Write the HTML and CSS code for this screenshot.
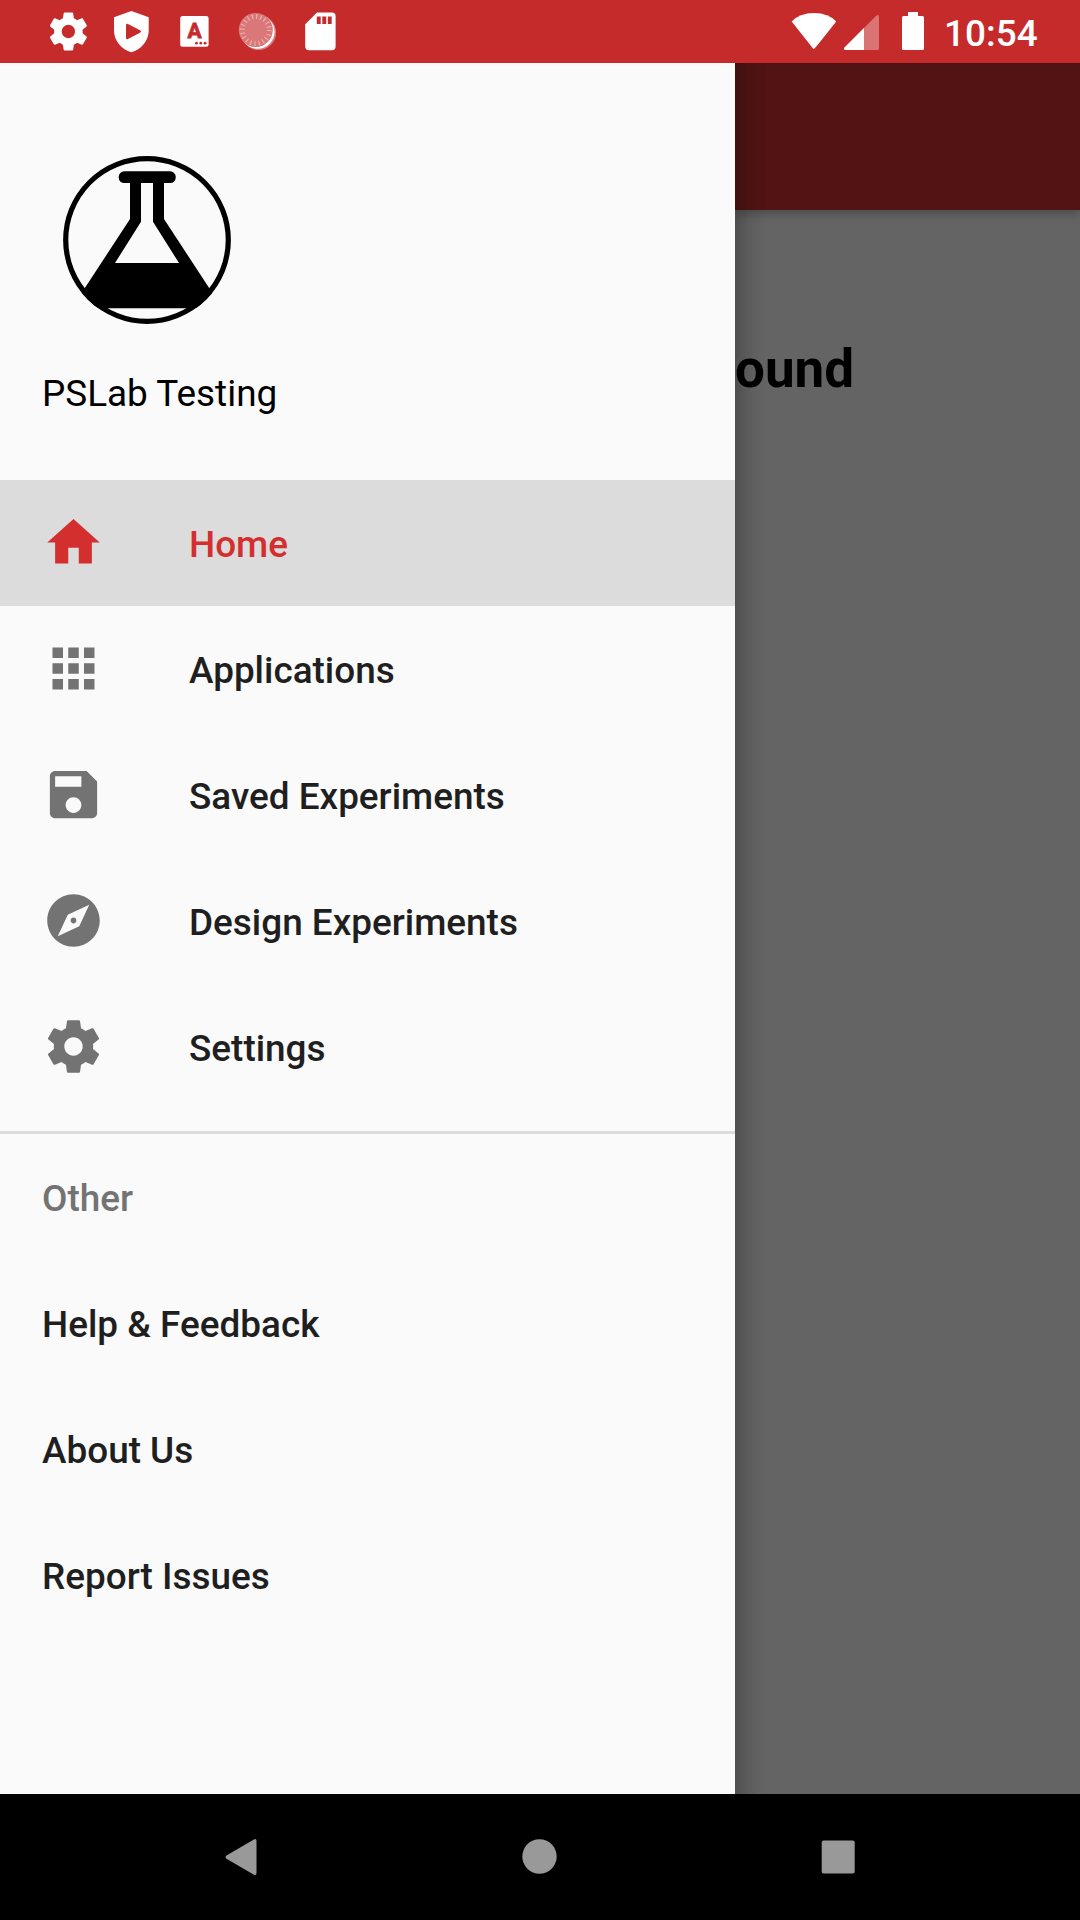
FILE: index.html
```html
<!DOCTYPE html>
<html lang="en">
<head>
<meta charset="utf-8">
<title>PSLab Testing</title>
<link rel="stylesheet" href="styles.css">
</head>
<body>
<div class="screen">
  <header class="status-bar">
    <div class="notifications">
      <svg class="status-icon" viewBox="0 0 63 63"><path transform="translate(8.6 8.7) scale(1.9)" d="M19.43 12.98c.04-.32.07-.64.07-.98s-.03-.66-.07-.98l2.11-1.65c.19-.15.24-.42.12-.64l-2-3.46c-.12-.22-.39-.3-.61-.22l-2.49 1c-.52-.4-1.08-.73-1.69-.98l-.38-2.65C14.46 2.18 14.25 2 14 2h-4c-.25 0-.46.18-.49.42l-.38 2.65c-.61.25-1.17.59-1.69.98l-2.49-1c-.23-.09-.49 0-.61.22l-2 3.46c-.13.22-.07.49.12.64l2.11 1.65c-.04.32-.07.65-.07.98s.03.66.07.98l-2.11 1.65c-.19.15-.24.42-.12.64l2 3.46c.12.22.39.3.61.22l2.49-1c.52.4 1.08.73 1.69.98l.38 2.65c.03.24.24.42.49.42h4c.25 0 .46-.18.49-.42l.38-2.65c.61-.25 1.17-.59 1.69-.98l2.49 1c.23.09.49 0 .61-.22l2-3.46c.12-.22.07-.49-.12-.64l-2.11-1.65zM12 15.5c-1.93 0-3.5-1.57-3.5-3.5s1.57-3.5 3.5-3.5 3.5 1.57 3.5 3.5-1.57 3.5-3.5 3.5z"/></svg>
      <svg class="status-icon" viewBox="100 0 63 63"><path fill-rule="evenodd" d="M131.4 11L148.7 17.3V30.500C148.700 41 141 49.500 131.400 52.300C121.800 49.500 114 41 114 30.500V17.300ZM126 25.300V37.800Q126 40 128 39L140 32.800Q142 31.500 140 30.300L128 24Q126 23 126 25.300Z"/></svg>
      <svg class="status-icon" viewBox="163 0 63 63"><rect x="180.200" y="16" width="28.400" height="30.800" rx="2.500"/><text class="badge-letter" x="194.500" y="38" text-anchor="middle">A</text><g class="cutout"><circle cx="196.500" cy="43.200" r="1.400"/><circle cx="200.800" cy="43.200" r="1.400"/><circle cx="205.100" cy="43.200" r="1.400"/></g></svg>
      <svg class="status-icon" viewBox="226 0 63 63"><circle cx="258.600" cy="32.500" r="17.500" opacity=".4"/><circle cx="257.500" cy="31.800" r="17"/><circle class="cutout" cx="255.700" cy="30" r="17"/><circle cx="255.700" cy="30" r="17" opacity=".36"/><circle class="sun-rays" cx="255.700" cy="30" r="13.500"/></svg>
      <svg class="status-icon" viewBox="289 0 63 63"><path fill-rule="evenodd" d="M317 12.500H332Q335.600 12.500 335.600 16V46.500Q335.600 50.200 332 50.200H309Q305.200 50.200 305.200 46.500V24.300ZM316.800 16.500V24H320.700V16.500ZM322.300 16.500V24H326.200V16.500ZM327.800 16.500V24H331.700V16.500Z"/></svg>
    </div>
    <div class="system-state">
      <svg class="state-icons" viewBox="785 0 145 63"><path d="M814 49Q815.400 48 836.200 21.500Q828.500 13 814 13Q799.500 13 791.700 21.500L812.800 48.300Q813.400 49 814 49Z"/><path d="M864 30V50H845Q843 49.500 844 48L876 16Q879 13.500 879 17V48.500Q879 50 877.500 50H864Z" opacity=".34"/><path d="M864 28V50H845.500Q843 49.500 844.500 47.500Z"/><path d="M908 12H918V16H922.500Q924 16 924 17.500V48.500Q924 50 922.500 50H903.500Q902 50 902 48.500V17.500Q902 16 903.500 16H908Z"/></svg>
      <span class="clock">10:54</span>
    </div>
  </header>

  <div class="content">
    <aside class="drawer">
      <div class="drawer-header">
        <svg class="logo" viewBox="63 156 168 168">
          <defs><clipPath id="logo-disc"><circle cx="147" cy="240" r="84"/></clipPath></defs>
          <circle class="logo-ring" cx="147" cy="240" r="81.300"/>
          <g clip-path="url(#logo-disc)">
            <rect x="118.700" y="171.300" width="57" height="11.700" rx="5.500"/>
            <path fill-rule="evenodd" d="M130 180H164V219L217 300L211 308.300H83L77 300L130 219ZM141 182.800V221.700L115 263H179L153 221.700V182.800Z"/>
          </g>
        </svg>
        <div class="account-name">PSLab Testing</div>
      </div>
      <nav class="menu">
        <a class="menu-item menu-item-active">
          <svg class="menu-icon" viewBox="0 0 24 24"><path d="M10 20v-6h4v6h5v-8h3L12 3 2 12h3v8z"/></svg>
          <span>Home</span>
        </a>
        <a class="menu-item">
          <svg class="menu-icon" viewBox="0 0 24 24"><path d="M4 8h4V4H4v4zm6 12h4v-4h-4v4zm-6 0h4v-4H4v4zm0-6h4v-4H4v4zm6 0h4v-4h-4v4zm6-10v4h4V4h-4zm-6 4h4V4h-4v4zm6 6h4v-4h-4v4zm0 6h4v-4h-4v4z"/></svg>
          <span>Applications</span>
        </a>
        <a class="menu-item">
          <svg class="menu-icon" viewBox="0 0 24 24"><path d="M17 3H5c-1.110 0-2 .9-2 2v14c0 1.100.89 2 2 2h14c1.100 0 2-.9 2-2V7l-4-4zm-5 16c-1.660 0-3-1.340-3-3s1.340-3 3-3 3 1.340 3 3-1.340 3-3 3zm3-10H5V5h10v4z"/></svg>
          <span>Saved Experiments</span>
        </a>
        <a class="menu-item">
          <svg class="menu-icon" viewBox="0 0 24 24"><path d="M12 10.900c-.61 0-1.100.49-1.100 1.100s.49 1.100 1.100 1.100c.61 0 1.100-.49 1.100-1.100s-.49-1.100-1.100-1.100zM12 2C6.480 2 2 6.480 2 12s4.480 10 10 10 10-4.480 10-10S17.520 2 12 2zm2.190 12.190L6 18l3.810-8.190L18 6l-3.810 8.190z"/></svg>
          <span>Design Experiments</span>
        </a>
        <a class="menu-item">
          <svg class="menu-icon" viewBox="0 0 24 24"><path d="M19.43 12.98c.04-.32.07-.64.07-.98s-.03-.66-.07-.98l2.11-1.65c.19-.15.24-.42.12-.64l-2-3.46c-.12-.22-.39-.3-.61-.22l-2.49 1c-.52-.4-1.08-.73-1.69-.98l-.38-2.65C14.46 2.18 14.25 2 14 2h-4c-.25 0-.46.18-.49.42l-.38 2.65c-.61.25-1.17.59-1.69.98l-2.49-1c-.23-.09-.49 0-.61.22l-2 3.46c-.13.22-.07.49.12.64l2.11 1.65c-.04.32-.07.65-.07.98s.03.66.07.98l-2.11 1.65c-.19.15-.24.42-.12.64l2 3.46c.12.22.39.3.61.22l2.49-1c.52.4 1.08.73 1.69.98l.38 2.65c.03.24.24.42.49.42h4c.25 0 .46-.18.49-.42l.38-2.65c.61-.25 1.17-.59 1.69-.98l2.49 1c.23.09.49 0 .61-.22l2-3.46c.12-.22.07-.49-.12-.64l-2.11-1.65zM12 15.5c-1.93 0-3.5-1.57-3.5-3.5s1.57-3.5 3.5-3.5 3.5 1.57 3.5 3.5-1.57 3.5-3.5 3.5z"/></svg>
          <span>Settings</span>
        </a>
      </nav>
      <nav class="menu-other">
        <div class="menu-item menu-heading"><span>Other</span></div>
        <a class="menu-item"><span>Help &amp; Feedback</span></a>
        <a class="menu-item"><span>About Us</span></a>
        <a class="menu-item"><span>Report Issues</span></a>
      </nav>
    </aside>
    <main class="page">
      <div class="app-bar"></div>
      <h1 class="page-title">ound</h1>
    </main>
  </div>

  <footer class="nav-bar">
    <svg class="nav-icon" viewBox="210 1825 63 63"><path d="M253.500 1839.700Q256.500 1838 256.500 1841V1873Q256.500 1876 253.500 1874.400L226.500 1858.800Q224.500 1857.200 226.500 1855.600Z"/></svg>
    <svg class="nav-icon" viewBox="508 1825 63 63"><circle cx="539.500" cy="1856.500" r="17.200"/></svg>
    <svg class="nav-icon" viewBox="806.500 1825 63 63"><rect x="821.200" y="1840.500" width="33" height="33" rx="2"/></svg>
  </footer>
</div>
</body>
</html>
```
FILE: styles.css
```css
* {
  box-sizing: border-box;
}

body {
  margin: 0;
  font-family: Roboto, "Liberation Sans", sans-serif;
  font-size: 36.9px;
}

.screen {
  display: flex;
  flex-direction: column;
  width: 1080px;
  height: 1920px;
  overflow: hidden;
}

.status-bar {
  display: flex;
  justify-content: space-between;
  height: 63px;
  padding: 0 42px 0 37px;
  background: #c62b2c;
  color: #fff;
}

.status-bar svg {
  display: block;
  fill: #fff;
}

.notifications,
.system-state {
  display: flex;
}

.status-icon {
  width: 63px;
  height: 63px;
}

.status-icon .cutout,
.status-icon .badge-letter {
  fill: #c62b2c;
}

.badge-letter {
  font-size: 21px;
  font-weight: 700;
  stroke: #c62b2c;
  stroke-width: 0.8px;
}

.status-icon .sun-rays {
  fill: none;
  stroke: #fff;
  stroke-width: 5px;
  stroke-dasharray: 1.2 3.041;
  opacity: 0.4;
}

.state-icons {
  width: 145px;
  height: 63px;
}

.clock {
  width: 94px;
  margin-left: 14px;
  font-weight: 500;
  line-height: 67px;
}

.content {
  display: flex;
  height: 1731px;
}

.drawer {
  width: 735px;
  background: #fafafa;
}

.drawer-header {
  height: 417px;
  padding: 93px 42px 0;
}

.logo {
  display: block;
  width: 168px;
  height: 168px;
  margin-left: 21px;
}

.logo-ring {
  fill: none;
  stroke: #000;
  stroke-width: 5.2px;
}

.account-name {
  margin-top: 48px;
  color: #000;
  line-height: 44px;
}

.menu {
  padding-bottom: 21px;
}

.menu-item {
  display: flex;
  align-items: center;
  gap: 84px;
  height: 126px;
  padding: 0 42px;
  color: #1f1f1f;
  font-weight: 500;
}

.menu-item span {
  padding-top: 2px;
}

.menu-icon {
  width: 63px;
  height: 63px;
  margin-bottom: 2px;
  fill: #737373;
}

.menu-item-active {
  background: #dcdcdc;
  color: #d32f2f;
}

.menu-item-active .menu-icon {
  fill: #d32f2f;
}

.menu-other {
  border-top: 3px solid #dadcdb;
}

.menu-heading {
  color: #737373;
}

.page {
  position: relative;
  flex: 1;
  overflow: hidden;
  background: #646464;
}

/* Shadow cast by the drawer onto the page */
.page::after {
  content: "";
  position: absolute;
  top: 0;
  bottom: 0;
  left: 0;
  width: 34px;
  background: linear-gradient(to right, rgba(0, 0, 0, 0.22), rgba(0, 0, 0, 0.08) 40%, rgba(0, 0, 0, 0.02) 75%, transparent);
}

.app-bar {
  height: 147px;
  background: #511313;
  box-shadow: 0 3px 10px rgba(0, 0, 0, 0.28);
}

.page-title {
  margin: 128px 0 0;
  color: #000;
  font-size: 53px;
  font-weight: 700;
  line-height: 62px;
}

.nav-bar {
  display: flex;
  justify-content: space-between;
  height: 126px;
  padding: 31px 210.5px 0 210px;
  background: #000;
}

.nav-icon {
  display: block;
  width: 63px;
  height: 63px;
  fill: #999;
}
```
